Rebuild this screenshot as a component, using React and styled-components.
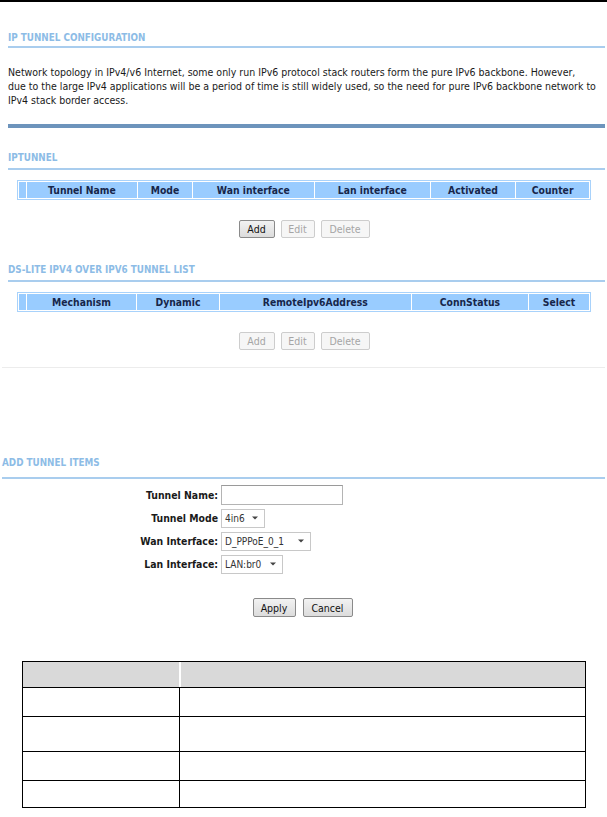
import styled, { createGlobalStyle } from "styled-components";

const GlobalStyle = createGlobalStyle`
  html, body {
    margin: 0;
    padding: 0;
    background: #fff;
  }
  body {
    font-family: "DejaVu Sans Condensed", "DejaVu Sans", sans-serif;
    color: #1e1e1e;
  }
`;

const tunnelCols = [
  { label: "", w: 7 },
  { label: "Tunnel Name", w: 112 },
  { label: "Mode", w: 55 },
  { label: "Wan interface", w: 123 },
  { label: "Lan interface", w: 117 },
  { label: "Activated", w: 86 },
  { label: "Counter", w: 74 },
];

const dsliteCols = [
  { label: "", w: 7 },
  { label: "Mechanism", w: 111 },
  { label: "Dynamic", w: 83 },
  { label: "RemoteIpv6Address", w: 194 },
  { label: "ConnStatus", w: 118 },
  { label: "Select", w: 61 },
];

const formRows = [
  { label: "Tunnel Name:", kind: "input" },
  { label: "Tunnel Mode", kind: "select", value: "4in6", w: 44 },
  { label: "Wan Interface:", kind: "select", value: "D_PPPoE_0_1", w: 90 },
  { label: "Lan Interface:", kind: "select", value: "LAN:br0", w: 62 },
];

const docRows = [28, 34, 28, 26];

function Caret() {
  return (
    <svg width="6" height="4" viewBox="0 0 6 4">
      <path d="M0 0.5h6L3 3.5z" fill="#444" />
    </svg>
  );
}

function HeaderTable({ cols }) {
  return (
    <HeadTable $cols={cols.map((c) => `${c.w}fr`).join(" ")}>
      {cols.map((c, i) => (
        <HeadCell key={i}>{c.label}</HeadCell>
      ))}
    </HeadTable>
  );
}

function ActionButtons({ addOn }) {
  return (
    <ButtonRow>
      <Btn $w={36} disabled={!addOn}>Add</Btn>
      <Btn $w={34} disabled>Edit</Btn>
      <Btn $w={49} disabled>Delete</Btn>
    </ButtonRow>
  );
}

export default function App() {
  return (
    <>
      <GlobalStyle />
      <Page>
        <TopRule />
        <Section $inset={8}>
          <SectionTitle $top={30} $pad={2}>IP TUNNEL CONFIGURATION</SectionTitle>
          <Intro>
            Network topology in IPv4/v6 Internet, some only run IPv6 protocol stack routers form the pure IPv6 backbone. However,
            <br />
            due to the large IPv4 applications will be a period of time is still widely used, so the need for pure IPv6 backbone network to
            <br />
            IPv4 stack border access.
          </Intro>
          <HeavyBar />

          <SectionTitle $top={24} $pad={4}>IPTUNNEL</SectionTitle>
          <HeaderTable cols={tunnelCols} />
          <ActionButtons addOn />

          <SectionTitle $top={26} $pad={4}>DS-LITE IPV4 OVER IPV6 TUNNEL LIST</SectionTitle>
          <HeaderTable cols={dsliteCols} />
          <ActionButtons addOn={false} />
        </Section>

        <ThinRule />

        <Section $inset={2}>
          <SectionTitle $top={89} $pad={8}>ADD TUNNEL ITEMS</SectionTitle>
          <Form>
            {formRows.map((r) => (
              <FormRow key={r.label}>
                <FieldLabel>{r.label}</FieldLabel>
                {r.kind === "input" ? (
                  <TextBox />
                ) : (
                  <SelectBox $w={r.w}>
                    <span>{r.value}</span>
                    <Caret />
                  </SelectBox>
                )}
              </FormRow>
            ))}
          </Form>
          <SubmitRow>
            <Btn $w={43} $tall>Apply</Btn>
            <Btn $w={50} $tall>Cancel</Btn>
          </SubmitRow>
        </Section>

        <DocTable>
          <DocHead>
            <DocCell $head />
            <DocCell $head $split />
          </DocHead>
          {docRows.map((h, i) => (
            <DocRow key={i} $h={h}>
              <DocCell />
              <DocCell $split />
            </DocRow>
          ))}
        </DocTable>
      </Page>
    </>
  );
}

const Page = styled.div`
  width: 607px;
  min-height: 817px;
  background: #fff;
`;

const TopRule = styled.div`
  height: 2px;
  background: #000;
`;

const Section = styled.section`
  padding: 0 2px 0 ${(p) => p.$inset}px;
`;

const SectionTitle = styled.h2`
  margin: ${(p) => p.$top}px 0 0;
  padding-bottom: ${(p) => p.$pad}px;
  border-bottom: 2px solid #a9cdee;
  font-size: 9.8px;
  line-height: 12px;
  font-weight: bold;
  color: #8dbce6;
`;

const Intro = styled.p`
  margin: 17px 0 0;
  font-size: 10.5px;
  line-height: 14px;
  color: #1a1a1a;
  white-space: nowrap;
`;

const HeavyBar = styled.div`
  margin-top: 17px;
  height: 4px;
  background: #6d94bc;
`;

const HeadTable = styled.div`
  display: grid;
  grid-template-columns: ${(p) => p.$cols};
  gap: 1px;
  margin: 10px 14px 0 9px;
  height: 20px;
  padding: 1px;
  box-sizing: border-box;
  background: #fff;
  border: 1px solid #a8d2fb;
`;

const HeadCell = styled.div`
  display: flex;
  align-items: center;
  justify-content: center;
  background: #99ccff;
  font-size: 10.3px;
  font-weight: bold;
  color: #17264a;
  white-space: nowrap;
`;

const ButtonRow = styled.div`
  display: flex;
  justify-content: center;
  gap: 6px;
  margin-top: 20px;
  padding-right: 5px;
`;

const Btn = styled.button`
  width: ${(p) => p.$w}px;
  height: ${(p) => (p.$tall ? 19 : 18)}px;
  padding: 0;
  font-family: "DejaVu Sans Condensed", "DejaVu Sans", sans-serif;
  font-size: 10.5px;
  color: #111;
  background: linear-gradient(#f2f2f2, #dcdcdc);
  border: 1px solid #8a8a8a;
  border-radius: 2px;

  &:disabled {
    color: #a5a5a5;
    background: #f6f6f6;
    border-color: #cdcdcd;
  }
`;

const ThinRule = styled.div`
  margin: 17px 2px 0;
  height: 1px;
  background: #ececec;
`;

const Form = styled.div`
  display: flex;
  flex-direction: column;
  gap: 3px;
  margin-top: 6px;
`;

const FormRow = styled.div`
  display: grid;
  grid-template-columns: 216px auto;
  column-gap: 3px;
  align-items: center;
  height: 20px;
`;

const FieldLabel = styled.label`
  text-align: right;
  font-size: 10.4px;
  font-weight: bold;
  color: #1a1a1a;
  white-space: nowrap;
`;

const TextBox = styled.div`
  width: 122px;
  height: 20px;
  box-sizing: border-box;
  border: 1px solid #b4b4b4;
  border-top-color: #9a9a9a;
  background: #fff;
`;

const SelectBox = styled.div`
  display: flex;
  align-items: center;
  justify-content: space-between;
  width: ${(p) => p.$w}px;
  height: 19px;
  box-sizing: border-box;
  padding: 0 6px 0 3px;
  border: 1px solid #c8c8c8;
  background: #fff;
  font-size: 10px;
  color: #333;
  white-space: nowrap;
`;

const SubmitRow = styled.div`
  display: flex;
  justify-content: center;
  gap: 7px;
  margin-top: 24px;
  padding-right: 2px;
`;

const DocTable = styled.div`
  margin: 44px 21px 0 22px;
  border: 1px solid #000;
`;

const DocHead = styled.div`
  display: grid;
  grid-template-columns: 156px 1fr;
  height: 25px;
  background: #d9d9d9;
  border-bottom: 1px solid #000;
`;

const DocRow = styled.div`
  display: grid;
  grid-template-columns: 156px 1fr;
  height: ${(p) => p.$h}px;
  border-bottom: 1px solid #000;

  &:last-child {
    border-bottom: none;
  }
`;

const DocCell = styled.div`
  background: ${(p) => (p.$head ? "#d9d9d9" : "#fff")};
  border-left: ${(p) => (p.$split ? (p.$head ? "2px solid #fff" : "1px solid #000") : "none")};
`;
